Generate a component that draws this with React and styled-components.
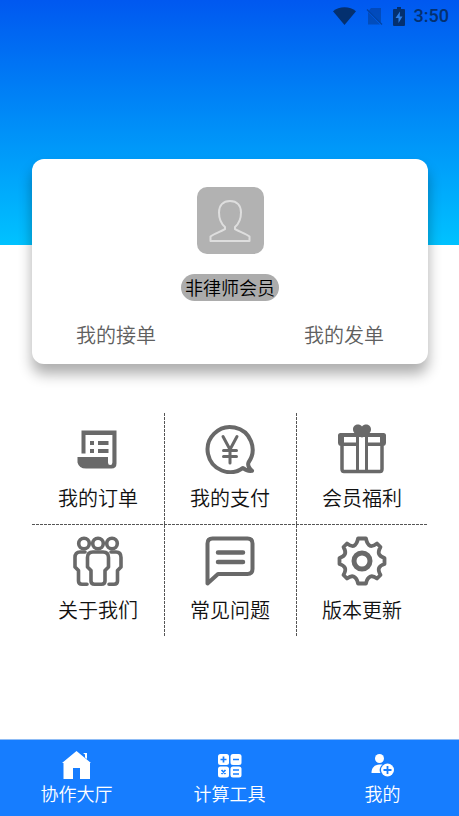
import React from "react";
import styled, { createGlobalStyle } from "styled-components";

const GlobalStyle = createGlobalStyle`
  *, *::before, *::after { box-sizing: border-box; }
  body {
    margin: 0;
    background: #fff;
    font-family: "Noto Sans CJK SC DemiLight", "Noto Sans CJK SC", "Noto Sans", sans-serif;
    font-weight: 350;
    color: #1c1c1c;
  }
  button { font: inherit; color: inherit; background: none; border: 0; padding: 0; cursor: pointer; }
  a { color: inherit; text-decoration: none; }
  svg { display: block; flex: none; }
`;

const Page = styled.div`
  display: flex;
  flex-direction: column;
  min-height: 100vh;
`;

const Hero = styled.header`
  height: 245px;
  background: linear-gradient(180deg, #0058f0, #00c2ff);
`;

const StatusBar = styled.div`
  display: flex;
  align-items: center;
  justify-content: flex-end;
  height: 32px;
  padding-right: 10px;
  color: #04306f;
  font: 500 18px/32px Roboto, sans-serif;
`;

const StatusIcons = styled.div`
  display: flex;
  align-items: center;
  gap: 10px;
  margin-right: 9px;
`;

const Content = styled.main`
  flex: 1;
  display: flex;
  flex-direction: column;
  gap: 49px;
  margin-top: -86px;
  padding: 0 31px 40px 32px;
`;

const ProfileCard = styled.section`
  display: flex;
  flex-direction: column;
  align-items: center;
  padding: 28px 32px 14px;
  border-radius: 12px;
  background: #fff;
  box-shadow: 0 10px 14px rgba(0, 0, 0, 0.32);
`;

const Avatar = styled.button`
  display: flex;
  align-items: center;
  justify-content: center;
  width: 67px;
  height: 67px;
  border-radius: 10px;
  background: #b2b2b2;
`;

const MemberTag = styled.span`
  margin-top: 20px;
  padding: 0 4px;
  border-radius: 14px;
  background: #acacac;
  color: #000;
  font-size: 18px;
  line-height: 27px;
`;

const CardLinks = styled.div`
  display: flex;
  justify-content: space-between;
  align-self: stretch;
  margin-top: 19px;
  padding: 0 12px;
`;

const CardLink = styled.button`
  && { color: #606060; }
  font-size: 20px;
  line-height: 30px;
`;

const MenuGrid = styled.section`
  display: grid;
  grid-template-columns: repeat(3, 1fr);
  grid-auto-rows: 112px;
`;

const horizontalDash = "repeating-linear-gradient(90deg, #555 0 3px, transparent 3px 4px) left bottom / 100% 1px no-repeat";
const verticalDash = "repeating-linear-gradient(180deg, #555 0 3px, transparent 3px 4px) left top / 1px 100% no-repeat";

const MenuCell = styled.button`
  && {
    display: flex;
    flex-direction: column;
    align-items: center;
    padding-top: 11px;
    color: #111;
    font-size: 20px;
    line-height: 30px;
    background: ${({ $left, $bottom }) =>
      [$left && verticalDash, $bottom && horizontalDash].filter(Boolean).join(", ") || "none"};
  }
  svg { margin-bottom: 9px; color: #696969; }
`;

const TabBar = styled.nav`
  display: grid;
  grid-template-columns: repeat(3, 1fr);
  border-top: 1px solid #8fbcf5;
  background: #167dff;
`;

const Tab = styled.a`
  && { color: #fff; }
  display: flex;
  flex-direction: column;
  align-items: center;
  padding: 10px 0;
  font-size: 18px;
  line-height: 26px;
`;

const WifiIcon = () => (
  <svg width="23" height="18" viewBox="0 0 23 18" fill="currentColor" aria-hidden="true">
    <path d="M0 4.2C6-1.2 17-1.2 23 4.2L11.5 18Z" />
  </svg>
);

const NoSimIcon = () => (
  <svg width="17" height="17" viewBox="0 0 17 17" aria-hidden="true">
    <path d="M5 0h10v14.500L3 2.500ZM2 4l12 12.500H2Z" fill="currentColor" opacity=".4" />
    <path d="M1 1.500l15 15" stroke="currentColor" strokeWidth="1.300" opacity=".6" />
  </svg>
);

const BatteryIcon = () => (
  <svg width="12" height="19" viewBox="0 0 12 19" aria-hidden="true">
    <path d="M4 0h4v2h3q1 0 1 1v15q0 1-1 1H1q-1 0-1-1V3q0-1 1-1h3Z" fill="currentColor" />
    <path d="M7 4.500L2.500 11H5.500V16L9.500 9.500H6.700Z" fill="#2b7ee8" />
  </svg>
);

const PersonIcon = () => (
  <svg width="42" height="42" viewBox="0 0 42 42" fill="none" stroke="#dedede" strokeWidth="2" strokeLinejoin="round" aria-hidden="true">
    <path d="M21 1C14 1 10 5.500 10 12.500c0 6 2.500 11.500 6 14.500v2.200C11 32 4.500 34 1.500 36.500V41h39v-4.500C37.500 34 31 32 26 29.200V27c3.500-3 6-8.500 6-14.500C32 5.500 28 1 21 1Z" />
  </svg>
);

const Glyph = ({ children, ...rest }) => (
  <svg width="50" height="50" viewBox="0 0 50 50" fill="none" stroke="currentColor" strokeWidth="4" strokeLinecap="round" strokeLinejoin="round" aria-hidden="true" {...rest}>
    {children}
  </svg>
);

const OrderIcon = () => (
  <Glyph stroke="none">
    <path fill="currentColor" fillRule="evenodd" d="M8.500 6.500h35v33q0 5-5 5H13q-7 0-8.500-6V33h30.500v5.500q0 2.500 2.200 2.500t2.200-2.500V11H12.500v18.500H8.500ZM17 17h4v4h-4Zm8 0h10.500v4H25ZM17 25h4v4h-4Zm8 0h10.500v4H25Z" />
  </Glyph>
);

const PaymentIcon = () => (
  <Glyph>
    <path d="M38 44A22.500 22.500 0 1 1 43.500 38.500Q42 42 47 46.800Q42 47.500 38 44Z" />
    <path d="M18 12.500l7 13 7-13M25 25v14M18.500 26.500h13M18.500 32.500h13" strokeWidth="3" />
  </Glyph>
);

const GiftIcon = () => (
  <Glyph>
    <path d="M5 22v23q0 2.500 2 2.500h36q2 0 2-2.500V22" strokeWidth="3.500" />
    <path d="M20.500 11v35M29.500 11v35" strokeWidth="3" />
    <path fill="currentColor" stroke="none" fillRule="evenodd" d="M3.500 9h43q2.500 0 2.500 2.500v7Q49 22 45.500 22h-41Q1 22 1 18.500v-7Q1 9 3.500 9ZM7 13v5.500h12V13Zm15 0v9h6v-9Zm9 0v5.500h12V13Z" />
    <path fill="currentColor" stroke="none" d="M25 2.500C22-1 16 .5 16 5.500c0 4 5 6.500 9 8C29 12 34 9.500 34 5.500c0-5-6-6.500-9-3Z" />
  </Glyph>
);

const TeamIcon = () => (
  <Glyph strokeWidth="3.600">
    <circle cx="11" cy="7.500" r="5.300" />
    <circle cx="25" cy="7.500" r="5.300" />
    <circle cx="39" cy="7.500" r="5.300" />
    <path d="M20 16h10q5.500 0 5.500 5.500V31l-3.500 3.500V45q0 3.200-3.500 3.200h-7Q18 48.200 18 45V34.500L14.500 31v-9.500Q14.500 16 20 16Z" />
    <path d="M12 16H7q-5 0-5 5.500V31l3.500 3.500V45q0 3.200 3.500 3.200h5M38 16h5q5 0 5 5.500V31l-3.500 3.500V45q0 3.200-3.500 3.200h-5" />
  </Glyph>
);

const QuestionIcon = () => (
  <Glyph>
    <path d="M7.500 2.500h35q5 0 5 5V33q0 5-5 5H13l-10.500 9.500V7.500q0-5 5-5Z" />
    <path d="M13 16.500h25M13 26h25" strokeWidth="4.500" />
  </Glyph>
);

const GearIcon = () => (
  <Glyph strokeWidth="3.800">
    <circle cx="25" cy="25" r="8" strokeWidth="5" />
    <path d="M21 2.500h8q1 6 4.500 7.500 2.500.5 6.500-2.500l3.500 3.500q-2.500 4.500-1.500 7 1 2.500 5.500 4v6q-4.500 1.500-5.500 4-1 2.500 1.500 7L40 42.500Q36 39.500 33.500 40.500 30 42 29 47.500h-8q-1-5.500-4.500-7-2.500-1-6.500 2L6.500 39q2.500-4.500 1.500-7-1-2.500-5.500-4v-6q4.500-1.500 5.500-4 1-2.500-1.500-7L10 7.500q4 3 6.500 2.500Q20 8.500 21 2.500Z" />
  </Glyph>
);

const HomeIcon = () => (
  <svg width="30" height="30" viewBox="0 0 30 30" fill="#fff" aria-hidden="true">
    <path d="M14.500 1L29 13h-1v16H18V18h-7v11H1.500V13H0ZM21 3h4v6l-2-1.500V4.500Z" />
  </svg>
);

const CalculatorIcon = () => (
  <svg width="30" height="30" viewBox="0 0 30 30" aria-hidden="true">
    <g fill="#fff">
      <rect x="3" y="4" width="11" height="11" rx="2.500" />
      <rect x="15.500" y="4" width="11" height="11" rx="2.500" />
      <rect x="3" y="16.500" width="11" height="11" rx="2.500" />
      <rect x="15.500" y="16.500" width="11" height="11" rx="2.500" />
    </g>
    <path d="M8.500 6.500v6M5.500 9.500h6M18 9.500h6M6.500 20l4 4M10.500 20l-4 4M18 20h6M18 24h6" stroke="#167dff" strokeWidth="1.700" />
  </svg>
);

const MeIcon = () => (
  <svg width="30" height="30" viewBox="0 0 30 30" aria-hidden="true">
    <circle cx="11.500" cy="8.500" r="4.500" fill="#fff" />
    <path d="M3.500 23c0-5 3-8.500 8-8.500h3c-3 2.500-3.500 6-2 8.500Z" fill="#fff" />
    <circle cx="19.500" cy="20" r="6.500" fill="#fff" />
    <path d="M19.500 16v8M15.500 20h8" stroke="#167dff" strokeWidth="1.800" />
  </svg>
);

const menuItems = [
  { label: "我的订单", Icon: OrderIcon },
  { label: "我的支付", Icon: PaymentIcon },
  { label: "会员福利", Icon: GiftIcon },
  { label: "关于我们", Icon: TeamIcon },
  { label: "常见问题", Icon: QuestionIcon },
  { label: "版本更新", Icon: GearIcon },
];

const tabs = [
  { label: "协作大厅", href: "#hall", Icon: HomeIcon },
  { label: "计算工具", href: "#tools", Icon: CalculatorIcon },
  { label: "我的", href: "#me", Icon: MeIcon },
];

export default function App() {
  return (
    <Page>
      <GlobalStyle />
      <Hero>
        <StatusBar>
          <StatusIcons>
            <WifiIcon />
            <NoSimIcon />
            <BatteryIcon />
          </StatusIcons>
          <time>3:50</time>
        </StatusBar>
      </Hero>
      <Content>
        <ProfileCard>
          <Avatar aria-label="头像">
            <PersonIcon />
          </Avatar>
          <MemberTag>非律师会员</MemberTag>
          <CardLinks>
            <CardLink>我的接单</CardLink>
            <CardLink>我的发单</CardLink>
          </CardLinks>
        </ProfileCard>
        <MenuGrid>
          {menuItems.map(({ label, Icon }, i) => (
            <MenuCell key={label} $left={i % 3 > 0} $bottom={i < 3}>
              <Icon />
              {label}
            </MenuCell>
          ))}
        </MenuGrid>
      </Content>
      <TabBar>
        {tabs.map(({ label, href, Icon }) => (
          <Tab key={label} href={href} aria-current={label === "我的" ? "page" : undefined}>
            <Icon />
            {label}
          </Tab>
        ))}
      </TabBar>
    </Page>
  );
}
